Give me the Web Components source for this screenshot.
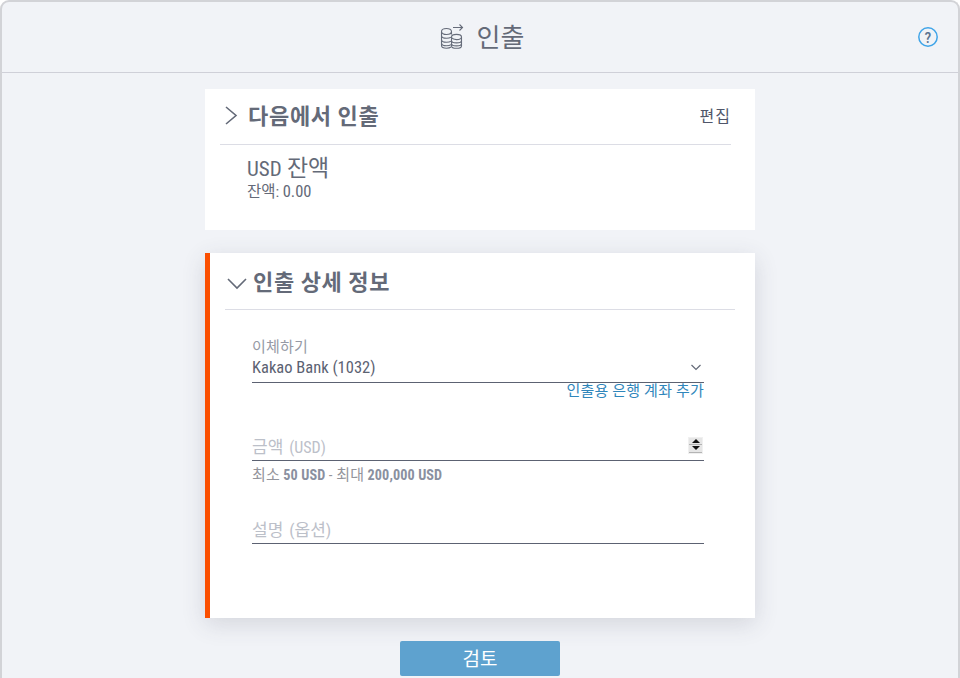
<!DOCTYPE html>
<html lang="ko">
<head>
<meta charset="utf-8">
<title>인출</title>
<style>
  html, body { margin: 0; height: 100%; overflow: hidden; }
  body { font-family: Roboto, "Noto Sans CJK KR", sans-serif; font-stretch: 78%; background: #fff; }
</style>
</head>
<body>
<withdraw-page>
  <page-header title-text="인출"></page-header>
  <source-card></source-card>
  <details-card></details-card>
  <review-button>검토</review-button>
</withdraw-page>

<script>
class WithdrawPage extends HTMLElement {
  constructor() {
    super();
    this.attachShadow({ mode: 'open' });
    this.shadowRoot.innerHTML = `
      <style>
        :host {
          display: flex; flex-direction: column; align-items: center;
          box-sizing: border-box; height: 678px; width: 960px;
          background: #f1f3f7;
          border: 2px solid #d2d3d7; border-bottom: 0;
          border-radius: 9px 9px 0 0;
          overflow: hidden;
        }
      </style>
      <slot></slot>`;
  }
}

class PageHeader extends HTMLElement {
  constructor() {
    super();
    this.attachShadow({ mode: 'open' });
    this.shadowRoot.innerHTML = `
      <style>
        :host {
          display: flex; align-items: center; justify-content: center;
          align-self: stretch; position: relative; box-sizing: border-box;
          height: 71px; border-bottom: 1px solid #cfd0d8;
          color: #646a78; font-size: 26px; margin-bottom: 16px;
        }
        .wrap { display: flex; align-items: center; gap: 12px; margin: -3px 0 0 3px; }
        svg.coins { display: block; }
        svg.help { position: absolute; right: 20px; top: 25px; }
      </style>
      <div class="wrap">
        <svg class="coins" width="26" height="26" viewBox="0 0 26 26" fill="none" stroke="#666c7a" stroke-width="1.1">
          <path d="M2.5 8.5c0-1.8 2.2-3 5-3s5 1.200 5 3-2.200 3-5 3-5-1.200-5-3z"/>
          <path d="M2.500 8.500v14c0 1.700 2.200 2.700 5 2.700 1.900 0 3.600-.4 4.500-1.200"/>
          <path d="M2.500 12.500c0 1.700 2.200 2.800 5 2.800 1.900 0 3.500-.4 4.500-1.200M2.500 16.500c0 1.700 2.200 2.800 5 2.800 1.900 0 3.500-.4 4.500-1.200M2.500 20c0 1.700 2.200 2.800 5 2.800 1.900 0 3.500-.4 4.500-1.200"/>
          <path d="M12.500 8.500v3"/>
          <path d="M12.500 14c0-1.500 2.200-2.600 5-2.600s5 1.100 5 2.600-2.200 2.600-5 2.600-5-1.100-5-2.600z"/>
          <path d="M12.500 14v9c0 1.400 2.200 2.300 5 2.300s5-.9 5-2.300v-9M12.500 17.500c0 1.400 2.200 2.400 5 2.400s5-1 5-2.400M12.500 20.500c0 1.400 2.200 2.400 5 2.400s5-1 5-2.400"/>
          <path d="M14 4.500h9.500M20.500 1.500l3 3-3 3"/>
        </svg>
        <span>${this.getAttribute('title-text')}</span>
      </div>
      <svg class="help" width="20" height="20" viewBox="0 0 20 20">
        <circle cx="10" cy="10" r="9.200" fill="none" stroke="#3fa4e8" stroke-width="1.500"/>
        <text x="10" y="15.500" text-anchor="middle" font-family="Roboto, sans-serif" font-weight="500" font-size="15.500" fill="#5c7391">?</text>
      </svg>`;
  }
}

class SourceCard extends HTMLElement {
  constructor() {
    super();
    this.attachShadow({ mode: 'open' });
    this.shadowRoot.innerHTML = `
      <style>
        :host {
          display: block; box-sizing: border-box; width: 550px; height: 141px;
          background: #fff; padding: 0 24px 0 15px; color: #646a78; margin-bottom: 23px;
        }
        .head {
          display: flex; align-items: center; border-bottom: 1px solid #dcdde5;
          box-sizing: border-box; height: 56px; padding-bottom: 6px;
        }
        svg { margin: 2px 10px 0 4px; }
        h2 { margin: 0; font-size: 22px; font-weight: 700; letter-spacing: .7px; flex: 1; }
        .edit { font-size: 16px; letter-spacing: 1px; color: #50566a; margin-top: 2px; }
        .body { padding: 11px 0 0 27px; }
        .name { font-size: 23px; line-height: 26px; }
        .name span { font-size: 21px; }
        .bal { font-size: 15.500px; line-height: 18px; margin-top: 1px; }
        .bal span { font-size: 16.500px; }
      </style>
      <div class="head">
        <svg width="14" height="22" viewBox="0 0 14 22" fill="none" stroke="#646a78" stroke-width="1.600"><path d="M2 3 12 11.500 2 20"/></svg>
        <h2>다음에서 인출</h2>
        <span class="edit">편집</span>
      </div>
      <div class="body">
        <div class="name"><span>USD</span> 잔액</div>
        <div class="bal">잔액: <span>0.00</span></div>
      </div>`;
  }
}

class FormField extends HTMLElement {
  constructor() {
    super();
    this.attachShadow({ mode: 'open' });
    const ph = this.getAttribute('placeholder');
    const note = this.getAttribute('note');
    this.shadowRoot.innerHTML = `
      <style>
        :host { display: block; position: relative; }
        .row {
          display: flex; align-items: center; justify-content: space-between;
          box-sizing: border-box; border-bottom: 1px solid #5c6272; height: 30px;
          font-size: 16.500px; color: #5c6272;
        }
        .ph { color: #bcc0c9; font-size: 17px; word-spacing: 2px; }
        .ph span { font-size: 16px; }
        ::slotted(*) { display: block; }
      </style>
      <slot name="label"></slot>
      <div class="row">
        <span class="${ph ? 'ph' : ''}">${ph || this.getAttribute('value') || ''}${note ? ` <span>${note}</span>` : ''}</span>
        <slot name="tail"></slot>
      </div>
      <slot name="below"></slot>`;
  }
}

class DetailsCard extends HTMLElement {
  constructor() {
    super();
    this.attachShadow({ mode: 'open' });
    this.shadowRoot.innerHTML = `
      <style>
        :host {
          display: block; box-sizing: border-box; width: 550px; height: 365px;
          background: #fff; border-left: 5px solid #fb4f00;
          padding: 0 20px 0 15px; color: #646a78; margin-bottom: 23px;
          box-shadow: 0 6px 22px rgba(60, 64, 90, .16);
        }
        .head {
          display: flex; align-items: center; height: 57px; box-sizing: border-box;
          border-bottom: 1px solid #dcdde5; padding-bottom: 2px;
        }
        svg.chev { margin: 8px 6px 0 2px; }
        h2 { margin: 0; font-size: 22px; font-weight: 700; letter-spacing: .7px; }
        .fields { padding: 28px 31px 0 27px; display: flex; flex-direction: column; }
        .label { font-size: 15px; line-height: 18px; color: #969aa5; letter-spacing: .2px; }
        .add { font-size: 15px; line-height: 16px; color: #2f86bb; text-align: right; letter-spacing: .25px; }
        .limits { font-size: 15px; line-height: 16px; color: #94959c; margin-top: 6px; letter-spacing: .1px; }
        .limits b { color: #8a90a0; font-size: 14.200px; }
        .amount { margin-top: 32px; }
        .desc { margin-top: 31px; }
        .spin {
          display: flex; flex-direction: column; width: 15px; height: 17px;
          background: #f0f0f0; padding: 1px; box-sizing: border-box; margin: -1px 1px 0 0;
        }
        .spin i {
          flex: 1; background: #e6e6e6; border-bottom: 1px solid #b4b4b4;
          display: flex; align-items: center; justify-content: center;
        }
      </style>
      <div class="head">
        <svg class="chev" width="20" height="14" viewBox="0 0 20 14" fill="none" stroke="#646a78" stroke-width="1.600"><path d="M1 2l9 9 9-9"/></svg>
        <h2>인출 상세 정보</h2>
      </div>
      <div class="fields">
        <form-field value="Kakao Bank (1032)">
          <div slot="label" class="label" style="margin-bottom:-3px">이체하기</div>
          <svg slot="tail" width="10" height="7" viewBox="0 0 10 7" fill="none" stroke="#646a78" stroke-width="1.200" style="margin-right:3px"><path d="M.5 1 5 5.500 9.500 1"/></svg>
          <div slot="below" class="add">인출용 은행 계좌 추가</div>
        </form-field>
        <form-field class="amount" placeholder="금액" note="(USD)">
          <div slot="tail" class="spin">
            <i><svg width="8" height="4" viewBox="0 0 8 4"><path d="M4 0 8 4H0z" fill="#111"/></svg></i>
            <i><svg width="8" height="4" viewBox="0 0 8 4"><path d="M0 0h8L4 4z" fill="#111"/></svg></i>
          </div>
          <div slot="below" class="limits">최소 <b>50 USD</b> - 최대 <b>200,000 USD</b></div>
        </form-field>
        <form-field class="desc" placeholder="설명 (옵션)"></form-field>
      </div>`;
  }
}

class ReviewButton extends HTMLElement {
  constructor() {
    super();
    this.attachShadow({ mode: 'open' });
    this.shadowRoot.innerHTML = `
      <style>
        :host {
          display: flex; align-items: center; justify-content: center; flex: none;
          width: 160px; height: 35px; background: #5ea2cf; color: #fff;
          border-radius: 2px; font-size: 19px; padding-bottom: 3px; box-sizing: border-box;
        }
      </style>
      <slot></slot>`;
  }
}

customElements.define('withdraw-page', WithdrawPage);
customElements.define('page-header', PageHeader);
customElements.define('source-card', SourceCard);
customElements.define('form-field', FormField);
customElements.define('details-card', DetailsCard);
customElements.define('review-button', ReviewButton);
</script>
</body>
</html>
